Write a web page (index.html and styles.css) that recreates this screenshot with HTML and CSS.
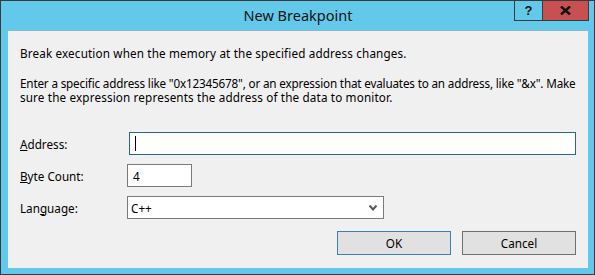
FILE: index.html
```html
<!DOCTYPE html>
<html>
<head>
<meta charset="utf-8">
<link rel="stylesheet" href="styles.css">
</head>
<body>
<div class="window">
  <div class="titlebar">
    <span class="title">New Breakpoint</span>
    <div class="caption-buttons">
      <div class="cap-btn help">?</div>
      <div class="cap-btn close">
        <svg width="11" height="9" viewBox="0 0 11 9"><path d="M1 0.5 L10 8.5 M10 0.5 L1 8.5" stroke="#111" stroke-width="2.4" fill="none"/></svg>
      </div>
    </div>
  </div>
  <div class="client">
    <p class="msg first">Break execution when the memory at the specified address changes.</p>
    <p class="msg"><span class="tight">Enter a specific address like "0x12345678", or an expression that evaluates to an address, like "&amp;x". Make</span><br>sure the expression represents the address of the data to monitor.</p>
    <div class="form">
      <label class="lbl"><u>A</u>ddress:</label>
      <div class="field address"><span class="caret"></span></div>
      <label class="lbl"><u>B</u>yte Count:</label>
      <div class="field count">4</div>
      <label class="lbl">Lan<u>g</u>uage:</label>
      <div class="field combo"><span>C++</span>
        <svg class="chev" width="8" height="6" viewBox="0 0 8 6"><path d="M0.5 0.5 L4 4.5 L7.5 0.5" stroke="#555" stroke-width="2" fill="none"/></svg>
      </div>
    </div>
    <div class="buttons">
      <div class="btn default">OK</div>
      <div class="btn">Cancel</div>
    </div>
  </div>
</div>
</body>
</html>
```
FILE: styles.css
```css
html, body {
  margin: 0;
  padding: 0;
}
body {
  font-family: "Noto Sans", "Liberation Sans", Arial, sans-serif;
  font-size: 11.7px;
  color: #000;
}
.window {
  position: relative;
  width: 595px;
  height: 275px;
  box-sizing: border-box;
  border: 1px solid #3a3a3a;
  background: #63c9ea;
  padding: 0 6px 6px 7px;
  display: flex;
  flex-direction: column;
}
.titlebar {
  height: 29px;
  flex: none;
  display: flex;
  justify-content: center;
  align-items: flex-start;
}
.title {
  font-size: 14.5px;
  line-height: 17px;
  margin-top: 6px;
  color: #111;
}
.caption-buttons {
  position: absolute;
  top: -1px;
  right: 5px;
  display: flex;
}
.cap-btn {
  height: 21px;
  box-sizing: border-box;
  border: 1px solid #3a3a3a;
  display: flex;
  align-items: center;
  justify-content: center;
}
.help {
  width: 29px;
  background: #63c9ea;
  font-family: "Liberation Sans", Arial, sans-serif;
  font-weight: bold;
  font-size: 13px;
  color: #111;
}
.close {
  width: 47px;
  margin-left: -1px;
  background: #c75050;
}
.client {
  flex: 1;
  background: #f0f0f0;
  border-top: 1px solid #8eb8cc;
  padding: 15px 12px 0 12px;
}
.msg {
  margin: 0;
  line-height: 14px;
  white-space: nowrap;
  letter-spacing: 0.15px;
}
.msg .tight {
  letter-spacing: -0.17px;
}
.msg.first {
  margin-bottom: 16px;
}
.form {
  margin-top: 28px;
  display: grid;
  grid-template-columns: 107px 1fr;
  row-gap: 9px;
  align-items: center;
}
.lbl {
  line-height: 14px;
}
.field {
  height: 23px;
  box-sizing: border-box;
  background: #fff;
  border: 1px solid #7a7a7a;
  display: flex;
  align-items: center;
  padding-left: 5px;
}
.address {
  margin-left: 2px;
  border-color: #2b6394;
}
.caret {
  width: 1px;
  height: 15px;
  background: #000;
}
.count {
  width: 65px;
}
.combo {
  width: 257px;
  padding-left: 3px;
  padding-right: 6px;
  justify-content: space-between;
}
.chev {
  margin-top: 1px;
}
.buttons {
  margin-top: 12px;
  display: flex;
  justify-content: flex-end;
  gap: 11px;
}
.btn {
  width: 114px;
  height: 24px;
  box-sizing: border-box;
  border: 1px solid #707070;
  background: #e1e1e1;
  display: flex;
  align-items: center;
  justify-content: center;
}
.btn.default {
  border-color: #3c7fb1;
}
```
